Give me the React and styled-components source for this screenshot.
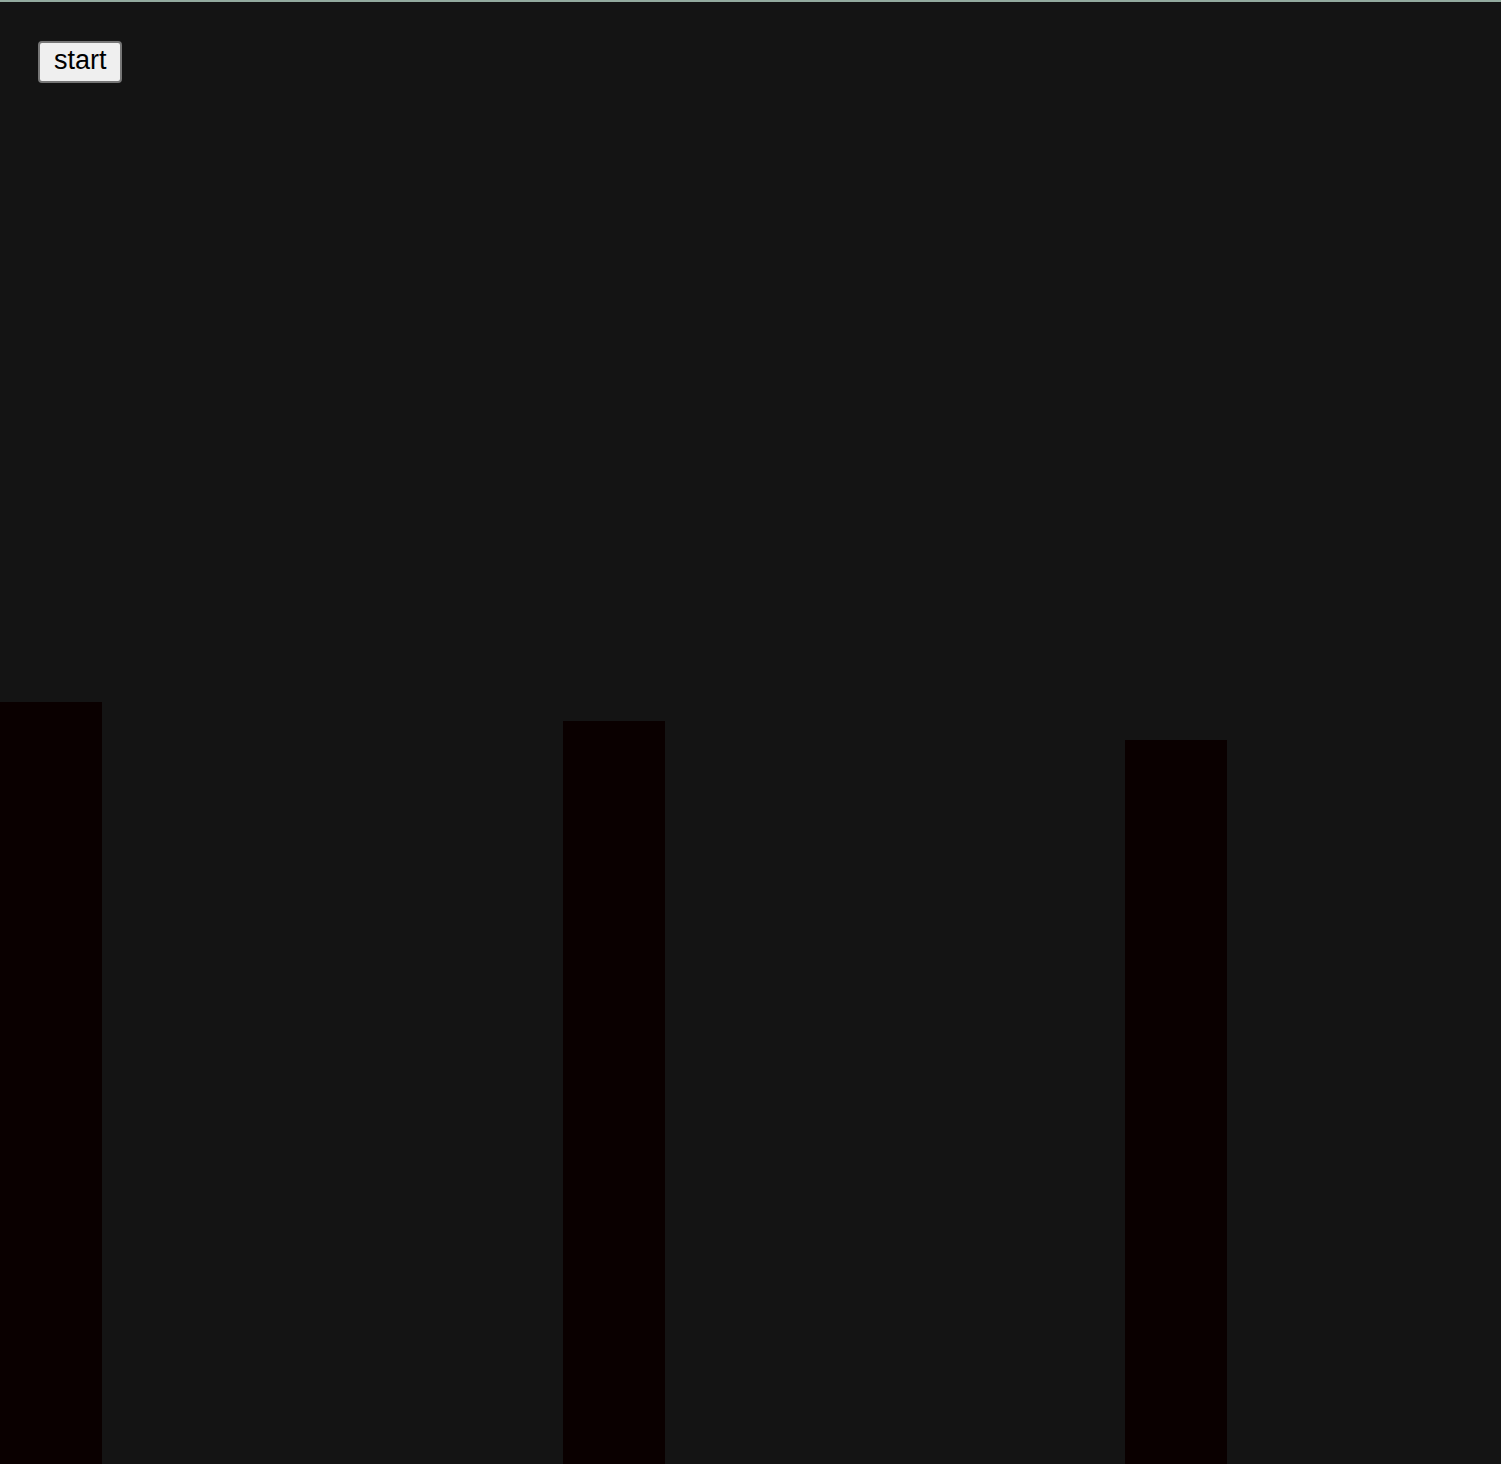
import styled, { createGlobalStyle } from 'styled-components';

const GlobalStyle = createGlobalStyle`
  html, body {
    margin: 0;
    padding: 0;
    background: #141414;
  }

  body {
    font-family: "Liberation Sans", Arial, sans-serif;
    overflow: hidden;
  }
`;

const Screen = styled.div`
  position: relative;
  width: 1501px;
  height: 1464px;
  background: #141414;
  border-top: 2px solid #93aa9f;
  box-sizing: border-box;
  overflow: hidden;
`;

const Controls = styled.div`
  position: relative;
  z-index: 1;
  padding: 39px 0 0 38px;
`;

const StartButton = styled.button`
  font-family: "Liberation Sans", Arial, sans-serif;
  font-size: 27px;
  line-height: 30px;
  color: #000;
  background: #efefef;
  border: 2px solid #767676;
  border-radius: 4px;
  padding: 2px 13px 6px 14px;
  cursor: pointer;
`;

const Pipe = styled.div`
  position: absolute;
  bottom: 0;
  width: 102px;
  background: #0a0000;
`;

// pipe positions on the playfield
const pipes = [
  { x: 0, top: 700 },
  { x: 563, top: 718.5 },
  { x: 1125, top: 737.5 },
];

export default function App() {
  return (
    <>
      <GlobalStyle />
      <Screen>
        <Controls>
          <StartButton>start</StartButton>
        </Controls>
        {pipes.map((p) => (
          <Pipe key={p.x} style={{ left: p.x, top: p.top }} />
        ))}
      </Screen>
    </>
  );
}
